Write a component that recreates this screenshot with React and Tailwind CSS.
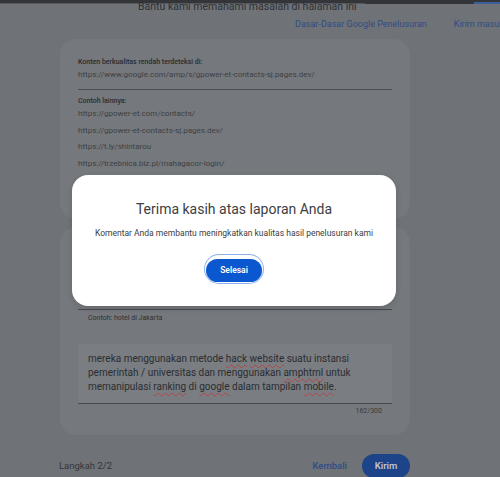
import React from "react";

const otherUrls = [
  "https://gpower-et.com/contacts/",
  "https://gpower-et-contacts-sj.pages.dev/",
  "https://t.ly/shintarou",
  "https://trzebnica.biz.pl/mahagacor-login/",
];

function Squiggle({ children }) {
  return (
    <span className="underline decoration-wavy decoration-[#b0464a] decoration-1 underline-offset-2">
      {children}
    </span>
  );
}

export default function App() {
  return (
    <div
      className="relative w-[500px] h-[477px] overflow-hidden bg-[#6f7277] text-[#2b2d31]"
      style={{ fontFamily: "Roboto, 'Noto Sans', Arial, sans-serif" }}
    >
      {/* top strip */}
      <div className="h-[4px] bg-[#333539] flex">
        <div className="w-[365px] border-b border-[#55585c]" />
        <div className="ml-auto w-[26px] border-b-2 border-[#3d5f9c]" />
      </div>

      <div className="text-[10.5px] leading-[12px] text-[#2e3034] pl-[138px] -mt-[3px]">
        Bantu kami memahami masalah di halaman ini
      </div>

      <div className="flex gap-[27px] pl-[295px] mt-[5px] text-[9px] leading-[12px] text-[#2f4d86] whitespace-nowrap">
        <span>Dasar-Dasar Google Penelusuran</span>
        <span>Kirim masukan</span>
      </div>

      {/* first card */}
      <div className="ml-[60px] mt-[9px] w-[350px] h-[180px] rounded-[16px] bg-[#75787c] px-[18px] pt-[18px]">
        <div className="text-[7px] leading-[10px] font-medium text-[#2a2c30]">Konten berkualitas rendah terdeteksi di:</div>
        <div className="text-[8px] leading-[12px] text-[#3e4145] mt-[2px]">
          https://www.google.com/amp/s/gpower-et-contacts-sj.pages.dev/
        </div>
        <div className="h-[1px] bg-[#4a4d51] mt-[8px]" />
        <div className="text-[7px] leading-[10px] font-medium text-[#2a2c30] mt-[6px]">Contoh lainnya:</div>
        <div className="flex flex-col gap-[5px] mt-[2px] text-[8px] text-[#3e4145]">
          {otherUrls.map((u) => (
            <div key={u} className="leading-[11.5px]">{u}</div>
          ))}
        </div>
      </div>

      {/* second card */}
      <div className="ml-[60px] mt-[8px] w-[350px] h-[208px] rounded-[16px] bg-[#75787c] px-[18px] pt-[82px]">
        <div className="h-[1px] bg-[#45484c]" />
        <div className="text-[7px] leading-[10px] text-[#2f3135] mt-[3px] ml-[10px]">Contoh: hotel di Jakarta</div>
        <div className="mt-[21px] h-[60px] bg-[#7a7d81] border-b border-[#45484c] px-[10px] pt-[8px] text-[10px] leading-[14px] text-[#2b2d31]">
          mereka menggunakan metode <Squiggle>hack</Squiggle> <Squiggle>website</Squiggle> suatu instansi
          <br />
          pemerintah / universitas dan menggunakan <Squiggle>amphtml</Squiggle> untuk
          <br />
          memanipulasi <Squiggle>ranking</Squiggle> di <Squiggle>google</Squiggle> dalam tampilan <Squiggle>mobile</Squiggle>.
        </div>
        <div className="text-right pr-[10px] mt-[2px] text-[7px] leading-[10px] text-[#383a3e]">162/300</div>
      </div>

      {/* footer */}
      <div className="flex items-center ml-[59px] mt-[19px] w-[351px]">
        <span className="text-[9.5px] text-[#34363a]">Langkah 2/2</span>
        <span className="ml-auto text-[9.5px] font-medium text-[#2f4d86]">Kembali</span>
        <span className="ml-[15px] w-[48px] h-[24px] rounded-full bg-[#1d4488] text-[#c9cdd4] text-[9.5px] font-medium flex items-center justify-center">
          Kirim
        </span>
      </div>

      {/* dialog */}
      <div className="absolute left-[72px] top-[175px] w-[324px] h-[131px] rounded-[16px] bg-white shadow-[0_2px_6px_rgba(0,0,0,0.15)] flex flex-col items-center">
        <div className="mt-[25px] text-[14px] leading-[18px] text-[#3c4043]">Terima kasih atas laporan Anda</div>
        <div className="mt-[9px] text-[8.5px] leading-[12px] text-[#3c4043]">
          Komentar Anda membantu meningkatkan kualitas hasil penelusuran kami
        </div>
        <div className="mt-[16px] rounded-full p-[1px] bg-white ring-1 ring-[#8ab0f0]">
          <button className="w-[56px] h-[23px] rounded-full bg-[#0b57d0] text-white text-[8.5px] font-semibold">
            Selesai
          </button>
        </div>
      </div>
    </div>
  );
}
